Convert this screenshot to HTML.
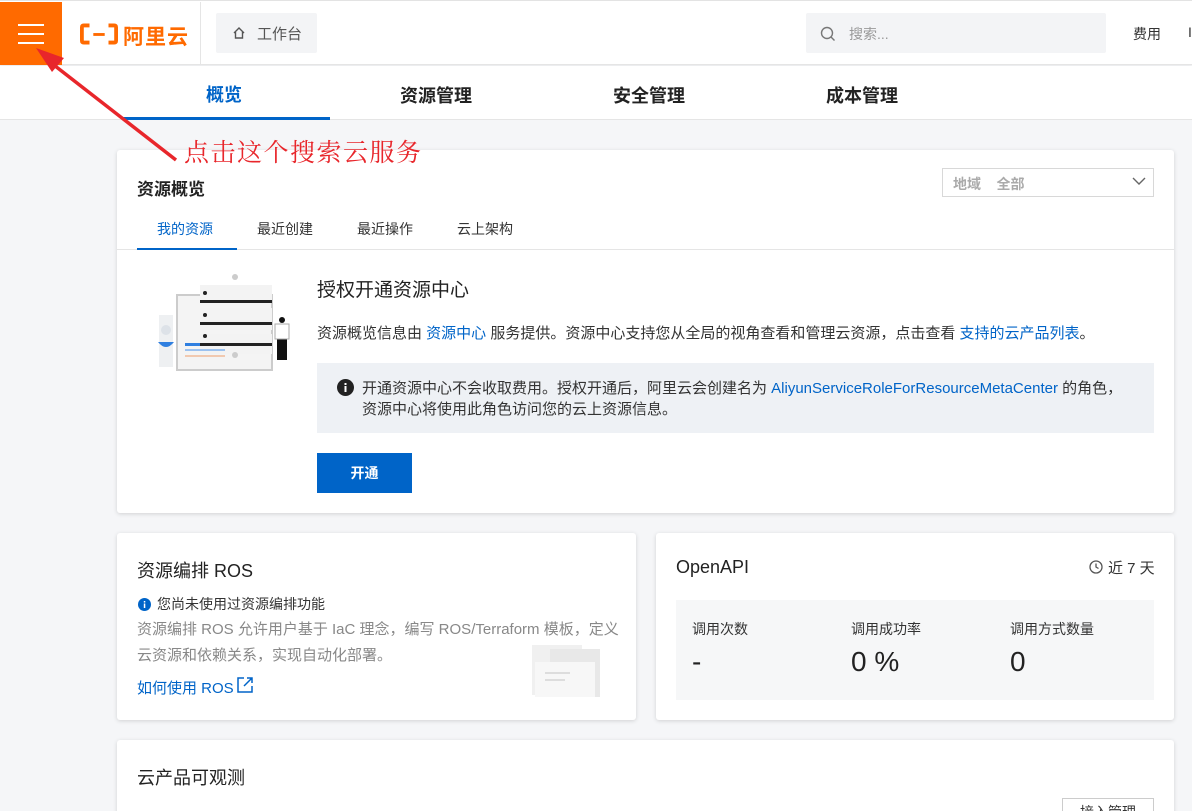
<!DOCTYPE html>
<html><head><meta charset="utf-8"><style>
*{margin:0;padding:0;box-sizing:border-box}
html,body{width:1192px;height:811px;overflow:hidden}
body{background:#f5f6f8;font-family:"Liberation Sans","Noto Sans CJK SC",sans-serif;color:#333;position:relative}
.a{position:absolute}
.card{position:absolute;background:#fff;border-radius:3px;box-shadow:0 1px 4px rgba(0,0,0,.15)}
.blue{color:#0064c8}
</style></head><body>
<div class="a" style="left:0;top:0;width:1192px;height:65px;background:#fff;border-top:1px solid #e3e3e3;border-bottom:1px solid #e5e5e5;box-shadow:0 1px 3px rgba(0,0,0,.06)"></div>
<div class="a" style="left:0;top:2px;width:62px;height:63px;background:#ff6a00">
 <div class="a" style="left:18px;top:22px;width:26px;height:2px;background:#fff"></div>
 <div class="a" style="left:18px;top:31px;width:26px;height:2px;background:#fff"></div>
 <div class="a" style="left:18px;top:40px;width:26px;height:2px;background:#fff"></div>
</div>
<svg class="a" style="left:80px;top:23px" width="38" height="22" viewBox="0 0 40 22"><path d="M10 2H4Q2 2 2 4V18Q2 20 4 20H10M30 2H36Q38 2 38 4V18Q38 20 36 20H30" stroke="#ff6a00" stroke-width="4" fill="none"/><rect x="14" y="10" width="12" height="3" fill="#ff6a00"/></svg>
<div class="a" style="left:123px;top:21px;font-size:21px;font-weight:bold;color:#ff6a00;letter-spacing:1px">阿里云</div>
<div class="a" style="left:200px;top:2px;width:1px;height:63px;background:#e5e5e5"></div>
<div class="a" style="left:216px;top:13px;width:101px;height:40px;background:#f3f4f6;border-radius:2px"></div>
<svg class="a" style="left:232px;top:26px" width="14" height="14" viewBox="0 0 14 14"><path d="M2 7L7 2L12 7M3.5 6V12H10.5V6" stroke="#555" stroke-width="1.4" fill="none"/></svg>
<div class="a" style="left:257px;top:23px;font-size:15px;color:#555">工作台</div>
<div class="a" style="left:806px;top:13px;width:300px;height:40px;background:#f3f4f6;border-radius:2px"></div>
<svg class="a" style="left:820px;top:26px" width="16" height="16" viewBox="0 0 16 16"><circle cx="7" cy="7" r="5.5" stroke="#777" stroke-width="1.4" fill="none"/><path d="M11 11L14.5 14.5" stroke="#777" stroke-width="1.4"/></svg>
<div class="a" style="left:849px;top:24px;font-size:14px;color:#999">搜索...</div>
<div class="a" style="left:1133px;top:24px;font-size:14px;color:#333">费用</div>
<div class="a" style="left:1188px;top:24px;font-size:14px;color:#333">I</div>

<div class="a" style="left:0;top:66px;width:1192px;height:54px;background:#fff;border-bottom:1px solid #e5e5e5"></div>
<div class="a" style="left:206px;top:81px;font-size:18px;font-weight:bold;color:#0064c8">概览</div>
<div class="a" style="left:123px;top:117px;width:207px;height:3px;background:#0064c8"></div>
<div class="a" style="left:400px;top:82px;font-size:18px;font-weight:bold;color:#222">资源管理</div>
<div class="a" style="left:613px;top:82px;font-size:18px;font-weight:bold;color:#222">安全管理</div>
<div class="a" style="left:826px;top:82px;font-size:18px;font-weight:bold;color:#222">成本管理</div>

<div class="card" style="left:117px;top:150px;width:1057px;height:363px"></div>
<div class="a" style="left:137px;top:175px;font-size:17px;font-weight:bold;color:#222">资源概览</div>
<div class="a" style="left:942px;top:168px;width:212px;height:29px;border:1px solid #d8d8d8;background:#fff"></div>
<div class="a" style="left:953px;top:174px;font-size:14px;color:#aaa;font-weight:bold">地域&nbsp;&nbsp;&nbsp;&nbsp;全部</div>
<svg class="a" style="left:1132px;top:177px" width="14" height="9" viewBox="0 0 14 9"><path d="M1 1L7 7L13 1" stroke="#666" stroke-width="1.4" fill="none"/></svg>
<div class="a" style="left:157px;top:219px;font-size:14px;color:#0064c8">我的资源</div>
<div class="a" style="left:257px;top:219px;font-size:14px;color:#333">最近创建</div>
<div class="a" style="left:357px;top:219px;font-size:14px;color:#333">最近操作</div>
<div class="a" style="left:457px;top:219px;font-size:14px;color:#333">云上架构</div>
<div class="a" style="left:117px;top:249px;width:1057px;height:1px;background:#e5e5e5"></div>
<div class="a" style="left:137px;top:248px;width:100px;height:2px;background:#0064c8"></div>
<svg class="a" style="left:155px;top:270px" width="145" height="102" viewBox="0 0 145 102">
<rect x="4" y="45" width="14" height="52" fill="#eef0f2"/><circle cx="11" cy="60" r="5" fill="#dde2e8"/><path d="M3 72Q11 82 19 72Z" fill="#2f7fe0"/>
<rect x="22" y="25" width="95" height="75" fill="#f4f4f4" stroke="#ccc" stroke-width="2"/>
<rect x="45" y="15" width="72" height="17" fill="#f3f3f3"/><rect x="45" y="30" width="72" height="3" fill="#222"/>
<rect x="45" y="38" width="72" height="22" fill="#f3f3f3"/><rect x="45" y="52" width="72" height="3" fill="#222"/>
<rect x="45" y="64" width="72" height="20" fill="#f3f3f3"/><rect x="45" y="73" width="72" height="3" fill="#222"/>
<circle cx="50" cy="23" r="2" fill="#222"/><circle cx="50" cy="45" r="2" fill="#222"/><circle cx="50" cy="66" r="2" fill="#222"/>
<rect x="30" y="73" width="15" height="3" fill="#2f7fe0"/><rect x="30" y="79" width="40" height="2" fill="#9cc2f0"/><rect x="30" y="85" width="40" height="2" fill="#f1c9b0"/>
<circle cx="80" cy="7" r="3" fill="#ccc"/><circle cx="80" cy="85" r="3" fill="#ccc"/>
<rect x="122" y="68" width="10" height="22" fill="#111"/><rect x="120" y="54" width="14" height="15" fill="#fff" stroke="#aaa"/><circle cx="127" cy="50" r="3" fill="#111"/>
</svg>
<div class="a" style="left:317px;top:275px;font-size:19px;color:#222">授权开通资源中心</div>
<div class="a" style="left:317px;top:322px;font-size:15px;color:#333">资源概览信息由 <span class="blue">资源中心</span> 服务提供。资源中心支持您从全局的视角查看和管理云资源，点击查看 <span class="blue">支持的云产品列表</span>。</div>
<div class="a" style="left:317px;top:363px;width:837px;height:70px;background:#eef1f5"></div>
<svg class="a" style="left:337px;top:379px" width="17" height="17" viewBox="0 0 17 17"><circle cx="8.5" cy="8.5" r="8.5" fill="#222"/><rect x="7.5" y="7" width="2" height="6" fill="#fff"/><rect x="7.5" y="4" width="2" height="2" fill="#fff"/></svg>
<div class="a" style="left:362px;top:378px;font-size:15px;color:#333;line-height:21px">开通资源中心不会收取费用。授权开通后，阿里云会创建名为 <span class="blue">AliyunServiceRoleForResourceMetaCenter</span> 的角色，<br>资源中心将使用此角色访问您的云上资源信息。</div>
<div class="a" style="left:317px;top:453px;width:95px;height:40px;background:#0064c8;color:#fff;font-size:14px;font-weight:bold;text-align:center;line-height:40px">开通</div>

<div class="card" style="left:117px;top:533px;width:519px;height:187px"></div>
<div class="a" style="left:137px;top:557px;font-size:18px;color:#222">资源编排 ROS</div>
<svg class="a" style="left:138px;top:598px" width="13" height="13" viewBox="0 0 13 13"><circle cx="6.5" cy="6.5" r="6.5" fill="#0064c8"/><rect x="5.8" y="5.5" width="1.5" height="4.5" fill="#fff"/><rect x="5.8" y="3" width="1.5" height="1.5" fill="#fff"/></svg>
<div class="a" style="left:157px;top:594px;font-size:14px;color:#333">您尚未使用过资源编排功能</div>
<div class="a" style="left:137px;top:617px;font-size:15px;color:#888;line-height:26px">资源编排 ROS 允许用户基于 IaC 理念，编写 ROS/Terraform 模板，定义<br>云资源和依赖关系，实现自动化部署。</div>
<div class="a" style="left:137px;top:677px;font-size:15px;color:#0064c8">如何使用 ROS</div>
<svg class="a" style="left:236px;top:676px" width="18" height="18" viewBox="0 0 18 18"><path d="M8 2H2V16H16V10M11 2H16V7M16 2L8 10" stroke="#0064c8" stroke-width="1.5" fill="none"/></svg>
<svg class="a" style="left:520px;top:637px" width="95" height="62" viewBox="0 0 95 62"><rect x="12" y="8" width="50" height="50" fill="#f0f0f0"/><rect x="30" y="12" width="50" height="48" fill="#e8e8e8"/><rect x="15" y="25" width="60" height="35" fill="#f7f7f7"/><rect x="25" y="35" width="25" height="2" fill="#ddd"/><rect x="25" y="42" width="20" height="2" fill="#ddd"/></svg>

<div class="card" style="left:656px;top:533px;width:518px;height:187px"></div>
<div class="a" style="left:676px;top:557px;font-size:18px;color:#222">OpenAPI</div>
<svg class="a" style="left:1089px;top:560px" width="14" height="14" viewBox="0 0 14 14"><circle cx="7" cy="7" r="6" stroke="#555" stroke-width="1.3" fill="none"/><path d="M7 3.5V7L9.5 8.5" stroke="#555" stroke-width="1.3" fill="none"/></svg>
<div class="a" style="left:1108px;top:557px;font-size:15px;color:#333">近 7 天</div>
<div class="a" style="left:676px;top:600px;width:478px;height:100px;background:#f6f7f8"></div>
<div class="a" style="left:692px;top:619px;font-size:14px;color:#333">调用次数</div>
<div class="a" style="left:851px;top:619px;font-size:14px;color:#333">调用成功率</div>
<div class="a" style="left:1010px;top:619px;font-size:14px;color:#333">调用方式数量</div>
<div class="a" style="left:692px;top:646px;font-size:28px;color:#222">-</div>
<div class="a" style="left:851px;top:646px;font-size:28px;color:#222">0 %</div>
<div class="a" style="left:1010px;top:646px;font-size:28px;color:#222">0</div>

<div class="card" style="left:117px;top:740px;width:1057px;height:90px"></div>
<div class="a" style="left:137px;top:764px;font-size:18px;color:#222">云产品可观测</div>
<div class="a" style="left:1062px;top:798px;width:92px;height:30px;border:1px solid #ccc;background:#fff;font-size:14px;text-align:center;line-height:26px">接入管理</div>

<svg class="a" style="left:0;top:0" width="200" height="180" viewBox="0 0 200 180"><path d="M176 160L50 62" stroke="#e8262b" stroke-width="3.5"/><path d="M36 48L64 58L52 72Z" fill="#e8262b"/></svg>
<div class="a" style="left:184px;top:133px;font-size:25px;color:#e8262b;font-family:'Noto Serif CJK SC',serif;letter-spacing:1.5px">点击这个搜索云服务</div>
</body></html>
